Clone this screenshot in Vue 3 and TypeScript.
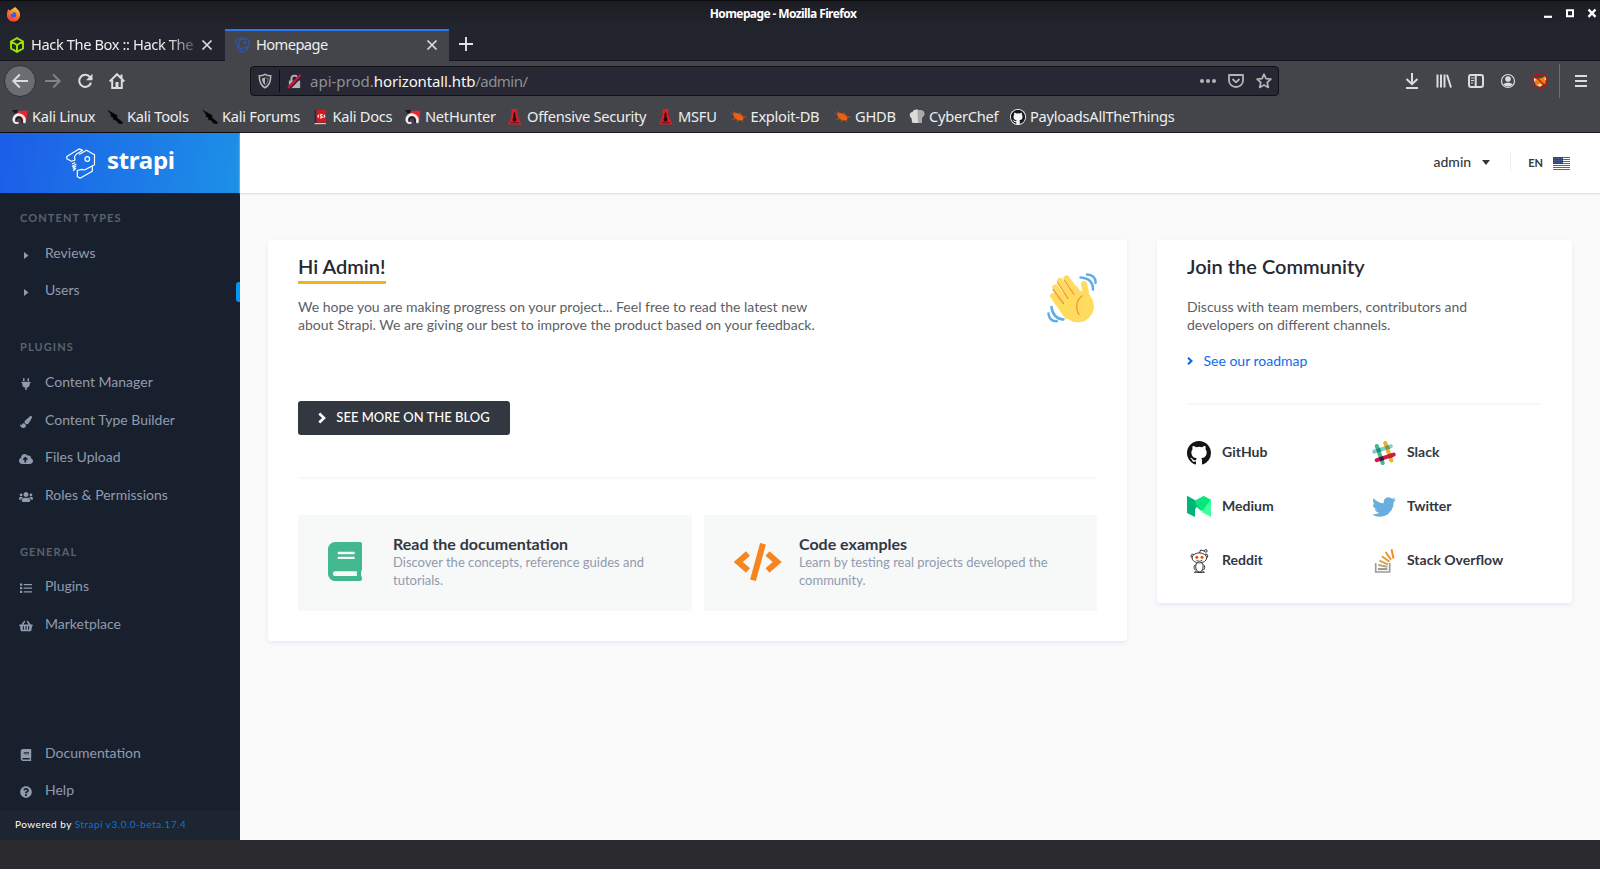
<script setup lang="ts">
interface Bookmark {
  label: string
  icon: string
  width: number
}
interface NavItem {
  label: string
  icon: string
  marked?: boolean
}
interface NavGroup {
  title: string
  items: NavItem[]
}

const bookmarks: Bookmark[] = [
  { label: 'Kali Linux', icon: 'dragon', width: 95 },
  { label: 'Kali Tools', icon: 'knife', width: 95 },
  { label: 'Kali Forums', icon: 'knife', width: 110.5 },
  { label: 'Kali Docs', icon: 'docs', width: 92.5 },
  { label: 'NetHunter', icon: 'dragon', width: 102 },
  { label: 'Offensive Security', icon: 'tower', width: 151 },
  { label: 'MSFU', icon: 'tower', width: 72.5 },
  { label: 'Exploit-DB', icon: 'bug', width: 104.5 },
  { label: 'GHDB', icon: 'bug', width: 74 },
  { label: 'CyberChef', icon: 'chef', width: 101 },
  { label: 'PayloadsAllTheThings', icon: 'octo', width: 170 },
]

const groups: NavGroup[] = [
  {
    title: 'Content types',
    items: [
      { label: 'Reviews', icon: 'caret' },
      { label: 'Users', icon: 'caret', marked: true },
    ],
  },
  {
    title: 'Plugins',
    items: [
      { label: 'Content Manager', icon: 'plug' },
      { label: 'Content Type Builder', icon: 'brush' },
      { label: 'Files Upload', icon: 'cloud' },
      { label: 'Roles & Permissions', icon: 'users' },
    ],
  },
  {
    title: 'General',
    items: [
      { label: 'Plugins', icon: 'list' },
      { label: 'Marketplace', icon: 'basket' },
    ],
  },
]

const footerItems: NavItem[] = [
  { label: 'Documentation', icon: 'book' },
  { label: 'Help', icon: 'help' },
]

const socials = [
  { label: 'GitHub', icon: 'github' },
  { label: 'Slack', icon: 'slack' },
  { label: 'Medium', icon: 'medium' },
  { label: 'Twitter', icon: 'twitter' },
  { label: 'Reddit', icon: 'reddit' },
  { label: 'Stack Overflow', icon: 'stack' },
]
</script>

<template>
  <div class="window">
    <svg class="defs" width="0" height="0">
      <linearGradient id="ff-body" x1="0.8" y1="0" x2="0.3" y2="1">
        <stop offset="0" stop-color="#ffd83a" />
        <stop offset="0.5" stop-color="#ff7a2b" />
        <stop offset="1" stop-color="#f0334e" />
      </linearGradient>
      <symbol id="dragon" viewBox="0 0 16 16">
        <path d="M4 2 15.500 1.500 14.500 11 11.500 14 9 8 4 6Z" fill="#e5262c" />
        <path d="M0 1h6L5 4.500 1.500 3.500Z" fill="#16171a" />
        <path d="M2 12c-1-4 2-7 6-6.300 3.500.8 5.500 4 4 8.300" fill="none" stroke="#f2f2f2" stroke-width="2.600" />
        <path d="M1.500 12c1.500 2.500 3.500 2.500 5 1.500" fill="none" stroke="#f2f2f2" stroke-width="1.800" />
        <path d="M4 11.500c0-2.500 3-4 5-2.300 1.200 1.200 1.500 2.800 1 4.800" fill="none" stroke="#17181c" stroke-width="1.200" />
      </symbol>
      <symbol id="knife" viewBox="0 0 16 16">
        <path d="M0 .5 8 5l2.500 1.500-.5 2 3 2.500 3 2.500-1 1.500-3.500-.5L9 11.500 6.500 11 6 8.500 3.500 7.500 4 5.500Z" fill="#050506" />
      </symbol>
      <symbol id="docs" viewBox="0 0 16 16">
        <path d="M1.500 1h2v14h-2z" fill="#1c2d5c" />
        <path d="M3.500 1h9.500v12.500H3.500z" fill="#dc1616" />
        <path d="M1.500 14H13v1.200H1.500z" fill="#f3bcbc" />
        <path d="m5.800 5.700-1 1.500 1 1.500m5-3 1 1.500-1 1.500M9.600 5.500c-2.600-.4-3 1.300-1.300 1.700s1.300 2-1.300 1.700" fill="none" stroke="#fff" stroke-width="1.100" />
      </symbol>
      <symbol id="tower" viewBox="0 0 16 16">
        <path d="M4.500 0h6v6.500l2 4.500 2 4.500H1L3 11l1.500-4.500Z" fill="#d81f26" />
        <path d="M7.500 2.500 8.500 5v3l1.200 3-1.400 1.500H6.700L5.300 11l1.200-3V5Z" fill="#2c0508" />
        <path d="M3.500 13.300h8.500v.9H3.500z" fill="#5f0d11" />
      </symbol>
      <symbol id="bug" viewBox="0 0 16 16">
        <path d="M2.500 4 6 4l4 1.500L12.500 8l-.5 3-3.500.5L4.500 10 2.500 7Z" fill="#ef5f11" />
        <path d="M.5 4 3 6M2 2.500 5 4.500M9 3.500 9.500 6M1.500 10.500l3-1M6 13l1.500-2M12 13l-1-2M12 8h3.500" stroke="#c4521a" stroke-width="1" fill="none" />
      </symbol>
      <symbol id="chef" viewBox="0 0 16 16">
        <path d="M3 13.500 2.500 9C-.3 7.500.5 3 3.500 3 4.500.2 9 0 10 1.500c4-1 7 2.500 4.500 5.500L13 8.500l-.5 5.500H5Z" fill="#dcdcdc" />
        <path d="M8.500 1 12 1.500C15 1 16.500 5 14 7.500L12.800 9l-.4 5H9Z" fill="#a9a9a9" />
      </symbol>
      <symbol id="mark" viewBox="0 0 16 16">
        <path d="M8 0C3.580 0 0 3.580 0 8c0 3.540 2.290 6.530 5.470 7.590.4.070.55-.17.55-.38 0-.19-.01-.82-.01-1.490-2.010.370-2.530-.49-2.690-.94-.09-.23-.48-.94-.82-1.130-.28-.15-.68-.52-.01-.53.630-.01 1.080.580 1.230.820.720 1.210 1.870.870 2.330.660.070-.52.280-.87.510-1.070-1.780-.2-3.640-.89-3.640-3.950 0-.87.310-1.590.820-2.150-.08-.2-.36-1.020.080-2.120 0 0 .670-.21 2.200.820a7.420 7.420 0 0 1 4 0c1.530-1.040 2.200-.82 2.200-.82.440 1.100.160 1.920.080 2.120.510.560.820 1.270.820 2.150 0 3.070-1.870 3.750-3.650 3.950.290.250.540.730.540 1.480 0 1.070-.01 1.930-.01 2.200 0 .210.150.460.550.380A8.010 8.010 0 0 0 16 8c0-4.420-3.580-8-8-8Z" />
      </symbol>
      <symbol id="octo" viewBox="0 0 16 16">
        <circle cx="8" cy="8" r="8" fill="#f4f4f4" />
        <g fill="#15181c" transform="translate(.9 .9) scale(.89)"><use href="#mark" width="16" height="16" /></g>
      </symbol>
      <symbol id="github" viewBox="0 0 16 16"><g fill="#161514"><use href="#mark" width="16" height="16" /></g></symbol>
      <symbol id="caret" viewBox="0 0 12 12"><path d="M4 3v7l4.500-3.500Z" fill="currentColor" /></symbol>
      <symbol id="plug" viewBox="0 0 384 512">
        <path fill="currentColor" d="M320 32a32 32 0 0 0-64 0v96h64Zm48 128H16a16 16 0 0 0-16 16v32a16 16 0 0 0 16 16h16v32a160.070 160.070 0 0 0 128 156.800V512h64v-99.200A160.070 160.070 0 0 0 352 256v-32h16a16 16 0 0 0 16-16v-32a16 16 0 0 0-16-16ZM128 32a32 32 0 0 0-64 0v96h64Z" />
      </symbol>
      <symbol id="brush" viewBox="0 0 512 512">
        <path fill="currentColor" d="M167 309.300c-40.100 2.600-76.500 17.900-97.200 72.300-2.300 6.200-8 10-14.600 10-11.100 0-45.400-27.700-55.200-34.300C0 439.600 38 512 128 512c75.900 0 128-43.800 128-120.200 0-3.100-.6-6.100-1-9.100zM457.900 0c-15.200 0-29.400 6.700-40.200 16.500C213.300 199 192 203.300 192 257.100c0 13.700 3.300 26.800 8.700 38.700l63.900 53.200c7.200 1.800 14.600 3 22.300 3 62.200 0 98.200-45.500 211.200-256.500C505.500 81.200 512 65.700 512 49.600 512 20.600 486 0 457.900 0z" />
      </symbol>
      <symbol id="cloud" viewBox="0 0 640 512">
        <path fill="currentColor" d="M537.600 226.600c4.100-10.700 6.400-22.400 6.400-34.600 0-53-43-96-96-96-19.700 0-38.100 6-53.300 16.200C367 64.200 315.300 32 256 32c-88.400 0-160 71.600-160 160 0 2.700.1 5.400.2 8.100C40.200 219.800 0 273.200 0 336c0 79.500 64.500 144 144 144h368c70.700 0 128-57.300 128-128 0-61.900-44-113.600-102.400-125.400zM393.400 288H328v112c0 8.800-7.200 16-16 16h-48c-8.800 0-16-7.200-16-16V288h-65.400c-14.300 0-21.400-17.200-11.300-27.300l105.400-105.400c6.200-6.200 16.400-6.200 22.600 0l105.400 105.400c10.100 10.100 2.900 27.300-11.300 27.300z" />
      </symbol>
      <symbol id="users" viewBox="0 0 640 512">
        <path fill="currentColor" d="M96 224c35.300 0 64-28.700 64-64s-28.700-64-64-64-64 28.700-64 64 28.700 64 64 64zm448 0c35.300 0 64-28.700 64-64s-28.700-64-64-64-64 28.700-64 64 28.700 64 64 64zm32 32h-64c-17.600 0-33.500 7.100-45.100 18.600 40.300 22.100 68.900 62 75.100 109.400h66c17.700 0 32-14.300 32-32v-32c0-35.300-28.700-64-64-64zm-256 0c61.900 0 112-50.100 112-112S381.900 32 320 32 208 82.100 208 144s50.100 112 112 112zm76.800 32h-8.300c-20.800 10-43.900 16-68.500 16s-47.600-6-68.500-16h-8.300C179.600 288 128 339.600 128 403.200V432c0 26.500 21.500 48 48 48h288c26.500 0 48-21.500 48-48v-28.800c0-63.600-51.600-115.200-115.200-115.200zm-223.700-13.400C161.500 263.100 145.600 256 128 256H64c-35.300 0-64 28.700-64 64v32c0 17.700 14.300 32 32 32h65.900c6.300-47.400 34.900-87.300 75.200-109.400z" />
      </symbol>
      <symbol id="list" viewBox="0 0 12 12">
        <path fill="currentColor" d="M0 1.500h2.200v2.200H0zM0 5.100h2.200v2.200H0zM0 8.700h2.200v2.200H0zM3.700 2H12v1.200H3.700zM3.700 5.600H12v1.200H3.700zM3.700 9.200H12v1.200H3.700z" />
      </symbol>
      <symbol id="basket" viewBox="0 0 576 512">
        <path fill="currentColor" d="M576 216v16c0 13.300-10.700 24-24 24h-8l-26.100 182.800c-3.400 23.600-23.600 41.200-47.500 41.200H105.600c-23.900 0-44.100-17.600-47.500-41.200L32 256h-8c-13.300 0-24-10.700-24-24v-16c0-13.300 10.700-24 24-24h67.300L198.100 45.200c10.400-14.300 30.400-17.500 44.700-7.100s17.500 30.400 7.100 44.700L170.500 192h235L326.100 82.800c-10.400-14.300-7.200-34.300 7.100-44.700s34.300-7.200 44.700 7.100L484.700 192H552c13.300 0 24 10.700 24 24zM312 392V280c0-13.300-10.700-24-24-24s-24 10.700-24 24v112c0 13.300 10.700 24 24 24s24-10.700 24-24zm112 0V280c0-13.300-10.700-24-24-24s-24 10.700-24 24v112c0 13.300 10.700 24 24 24s24-10.700 24-24zm-224 0V280c0-13.300-10.700-24-24-24s-24 10.700-24 24v112c0 13.300 10.700 24 24 24s24-10.700 24-24z" />
      </symbol>
      <symbol id="book" viewBox="0 0 448 512">
        <path fill="currentColor" d="M448 360V24c0-13.300-10.700-24-24-24H96C43 0 0 43 0 96v320c0 53 43 96 96 96h328c13.300 0 24-10.700 24-24v-16c0-7.500-3.500-14.300-8.900-18.700-4.200-15.400-4.200-59.300 0-74.700 5.400-4.300 8.900-11.100 8.900-18.600zM128 134c0-3.300 2.700-6 6-6h212c3.300 0 6 2.700 6 6v20c0 3.300-2.700 6-6 6H134c-3.300 0-6-2.700-6-6v-20zm0 64c0-3.300 2.700-6 6-6h212c3.300 0 6 2.700 6 6v20c0 3.300-2.700 6-6 6H134c-3.300 0-6-2.700-6-6v-20zm253.400 250H96c-17.700 0-32-14.300-32-32 0-17.600 14.400-32 32-32h285.400c-1.900 17.100-1.900 46.900 0 64z" />
      </symbol>
      <symbol id="help" viewBox="0 0 512 512">
        <path fill="currentColor" d="M504 256c0 137-111 248-248 248S8 393 8 256C8 119.100 119 8 256 8s248 111.100 248 248zM262.700 90c-54.500 0-89.300 23-116.600 63.800-3.500 5.200-2.400 12.400 2.700 16.200l34.700 26.300c5.200 4 12.600 3 16.700-2.100 17.800-22.700 30.100-35.800 57.300-35.800 20.400 0 45.700 13.100 45.700 33 0 14.900-12.400 22.600-32.500 33.900C247.100 238.500 216 254.900 216 296v4c0 6.600 5.400 12 12 12h56c6.600 0 12-5.400 12-12v-1.300c0-28.500 83.200-29.700 83.200-106.700 0-58-60.200-102-116.500-102zM256 338c-25.400 0-46 20.600-46 46s20.600 46 46 46 46-20.600 46-46-20.600-46-46-46z" />
      </symbol>
      <symbol id="slack" viewBox="0 0 24 24">
        <g fill="none" stroke-width="4" stroke-linecap="round">
          <path d="m2.200 10.700 16.600-5.400" stroke="#7fcbd8" />
          <path d="m13.300 2 6 17.500" stroke="#ecb22e" />
          <path d="m4.800 5 5.900 17" stroke="#43b98c" />
          <path d="m4.700 19.200 17-5.600" stroke="#d5135a" />
        </g>
        <path d="m4.200 8 3.800-1.300 1.300 3.900-3.800 1.200Z" fill="#1e8c78" />
        <path d="m12.800 5.200 3.800-1.200 1.300 3.800-3.800 1.300Z" fill="#789a3d" />
        <path d="m7 16.400 3.800-1.200 1.300 3.800-3.800 1.200Z" fill="#311c32" />
        <path d="m15.700 13.500 3.800-1.200 1.300 3.900-3.800 1.200Z" fill="#c82026" />
      </symbol>
      <symbol id="medium" viewBox="0 0 24 24">
        <path d="M8 5.500 16.500 1 24 5 15.500 16.500Z" fill="#12e27f" />
        <path d="M16.500 1 24 5 14 15.500 10.500 10.500Z" fill="#00e97a" />
        <path d="M8 5 14.500 16 8 17Z" fill="#00cc77" />
        <path d="M24 5v17l-9.500-5Z" fill="#3fffa0" />
        <path d="M8 14.500 10 12l4.500 4.500-3 .5L8 20Z" fill="#fff" />
        <path d="M0 .8 8 5v17l-8-4Z" fill="#00b676" />
      </symbol>
      <symbol id="twitter" viewBox="0 0 24 24">
        <path fill="#68afe0" d="M23.953 4.570a10 10 0 0 1-2.825.775 4.958 4.958 0 0 0 2.163-2.723c-.951.555-2.005.959-3.127 1.184a4.920 4.920 0 0 0-8.384 4.482C7.690 8.095 4.067 6.130 1.640 3.162a4.822 4.822 0 0 0-.666 2.475c0 1.710.870 3.213 2.188 4.096a4.904 4.904 0 0 1-2.228-.616v.060a4.923 4.923 0 0 0 3.946 4.827 4.996 4.996 0 0 1-2.212.085 4.936 4.936 0 0 0 4.604 3.417 9.867 9.867 0 0 1-6.102 2.105c-.390 0-.779-.023-1.170-.067a13.995 13.995 0 0 0 7.557 2.209c9.053 0 13.998-7.496 13.998-13.985 0-.210 0-.420-.015-.630A9.935 9.935 0 0 0 24 4.590z" />
      </symbol>
      <symbol id="reddit" viewBox="0 0 24 24">
        <g fill="#fff" stroke="#222" stroke-width="0.900">
          <path d="M12.500 4 13.500 1l4 1" fill="none" />
          <circle cx="18.800" cy="1.900" r="1.300" />
          <ellipse cx="12.400" cy="17.700" rx="3.700" ry="5.200" />
          <path d="M8.600 15.500c-2 1-2 4.500-.2 5.500M16.200 15.500c2 1 2 4.500.2 5.500M7.300 23.500h10.200" fill="none" />
          <path d="M8 23.300c-.5-1.500 2-1.800 2.500 0M14.300 23.300c.5-1.800 3-1.500 2.500 0" />
          <circle cx="5.800" cy="7" r="1.800" />
          <circle cx="19" cy="7" r="1.800" />
          <ellipse cx="12.400" cy="8.900" rx="7.300" ry="5" />
          <path d="M9.500 11.300c1.800 1.300 4 1.300 5.800 0" fill="none" />
        </g>
        <circle cx="9.800" cy="8.300" r="1.500" fill="#ff4500" />
        <circle cx="15" cy="8.300" r="1.500" fill="#ff4500" />
      </symbol>
      <symbol id="stack" viewBox="0 0 24 24">
        <path d="M3.700 14v9h14v-9" fill="none" stroke="#9c9c9c" stroke-width="1.700" />
        <g fill="none" stroke-width="2">
          <path d="M6 20.100h9.400" stroke="#9a9590" />
          <path d="m6.200 16.100 9.200 1.700" stroke="#bfa67a" />
          <path d="m7.300 11.700 8.700 3.700" stroke="#d2a252" />
          <path d="m9.800 7.200 7.700 5.600" stroke="#e39a32" />
          <path d="m13.700 3 5.300 7.800" stroke="#f29323" />
          <path d="m19.500.3 2 9.300" stroke="#f48c1c" />
        </g>
      </symbol>
      <symbol id="bird" viewBox="0 0 30 31">
        <g fill="none" stroke="currentColor" stroke-linejoin="round">
          <path d="M.8 8.500 13 .9l3.500 1.500L10.500 6 8.500 8.500 9 12l-3.500 1.200-4.700-2.400Z" />
          <path d="M13 6.500 20.500 2.200l8 4.600v10L18.500 22l-2.700-.7-4.500 1.200v6L14 30.200l12.300-7v-4.700" />
          <path d="m9 14.500-3 1.500m4.300 0-3.800 2.200 1.700.2M10.300 18l-3.300 2 2 .3M10 20.300l-3 2.500" />
        </g>
        <circle cx="21.300" cy="11" r="2.300" fill="none" stroke="currentColor" />
      </symbol>
      <symbol id="close" viewBox="0 0 12 12"><path d="m1.500 1.500 9 9m0-9-9 9" stroke="currentColor" stroke-width="1.700" fill="none" /></symbol>
    </svg>

    <header class="chrome">
      <div class="titlebar">
        <svg class="firefox" viewBox="0 0 16 16">
          <path d="M2.500 2.500 4 4c2-1.500 3-2 5.500-4C12 2 15.500 5 15 9c-.5 4-3.500 6.500-7 6.500S1 13 1 9c0-3 .5-4.500 1.500-6.500Z" fill="url(#ff-body)" />
          <circle cx="8" cy="8.300" r="3" fill="#3a62d8" />
          <path d="M3 6.500c2 0 3-1 5-.8L6.800 7.500Z" fill="#ff9a35" />
        </svg>
        <span class="window-title">Homepage - Mozilla Firefox</span>
        <svg class="window-buttons" viewBox="0 0 54 14">
          <path d="M1 9.800h8" stroke="#fff" stroke-width="2.200" />
          <path d="M24 3.200h6v6h-6z" fill="none" stroke="#fff" stroke-width="2" />
          <path d="m45.500 2.500 7 7.400m0-7.400-7 7.400" stroke="#fff" stroke-width="2.400" />
        </svg>
      </div>

      <div class="tabs">
        <div class="tab">
          <svg class="tab-icon" viewBox="0 0 16 16"><path d="M8 1.200 14 4.500v7L8 14.800 2 11.500v-7ZM2 4.500 8 8l6-3.500M8 8v6.500" fill="none" stroke="#9be800" stroke-width="1.900" /></svg>
          <span class="tab-label faded">Hack The Box :: Hack The</span>
          <svg class="tab-close"><use href="#close" /></svg>
        </div>
        <div class="tab active">
          <svg class="tab-icon blue"><use href="#bird" /></svg>
          <span class="tab-label">Homepage</span>
          <svg class="tab-close"><use href="#close" /></svg>
        </div>
        <svg class="plus" viewBox="0 0 14 14"><path d="M7 0v14M0 7h14" stroke="#e4e4e4" stroke-width="1.900" /></svg>
      </div>

      <div class="toolbar">
        <div class="nav-buttons">
          <span class="back"><svg viewBox="0 0 16 16"><path d="M16 8H1.500m6.300-6.500L1.300 8l6.500 6.500" /></svg></span>
          <svg class="dim" viewBox="0 0 16 16"><path d="M0 8h14.500M8.200 1.500 14.700 8l-6.500 6.500" /></svg>
          <svg viewBox="0 0 16 16"><path d="M13 4.200A6 6 0 1 0 14 9.600" /><path d="M15.500.8v6.500H9Z" class="solid" /></svg>
          <svg viewBox="0 0 16 16"><path d="M.7 8.500 8 1.200l7.300 7.300M3.200 7v8h9.600V7M12.500 1.500V5" /><path d="M6.500 9h3v6h-3z" class="solid" /></svg>
        </div>
        <div class="urlbar">
          <svg class="shield" viewBox="0 0 16 16"><path d="M8 1.300c2 1.300 4 1.400 5.700 1.400 0 5-.5 9.500-5.700 12-5.200-2.500-5.700-7-5.700-12C4 2.700 6 2.600 8 1.300Z" fill="none" stroke="#b4b4b8" stroke-width="1.600" /><path d="M8 4.500c-1 .6-2 .8-3 .8 0 3 .5 5 3 6.700Z" fill="#b4b4b8" /><path d="M8 4.500c1 .6 2 .8 3 .8 0 3-.5 5-3 6.700" fill="none" stroke="#b4b4b8" stroke-width=".6" /></svg>
          <i class="url-divider"></i>
          <svg class="lock" viewBox="0 0 16 16"><path d="M2 7h12v8H2z" fill="#b4b4b8" /><path d="M4.700 8V5a3.300 3.300 0 0 1 6.600 0v3" fill="none" stroke="#b4b4b8" stroke-width="2" /><path d="M1.500 15.500 15 1.500" stroke="#272833" stroke-width="4" /><path d="M1 15 14.500 1" stroke="#e8123f" stroke-width="2" /></svg>
          <span class="url">api-prod.<b>horizontall.htb</b><span class="path">/admin/</span></span>
          <div class="url-actions">
            <svg viewBox="0 0 16 16"><g fill="#b4b4b8"><circle cx="2" cy="8" r="2" /><circle cx="8" cy="8" r="2" /><circle cx="14" cy="8" r="2" /></g></svg>
            <svg viewBox="0 0 16 16"><path d="M1 2h14v5.500a7 6.500 0 0 1-14 0Zm3.500 4L8 9.300 11.500 6" fill="none" stroke="#b4b4b8" stroke-width="1.800" stroke-linejoin="round" /></svg>
            <svg viewBox="0 0 16 16"><path d="m8 1.200 2 4.500 4.900.5-3.700 3.300 1.100 4.900L8 12l-4.300 2.400 1.100-4.900-3.700-3.300 4.900-.5Z" fill="none" stroke="#b4b4b8" stroke-width="1.700" stroke-linejoin="round" /></svg>
          </div>
        </div>
        <div class="tools">
          <svg viewBox="0 0 16 16"><path d="M8 0v11M2.500 6 8 11.200 13.500 6M2 15h12" /></svg>
          <svg viewBox="0 0 16 16"><path d="M1.500 1.500v13M5 1.500v13M8.500 1.500v13M11 1.800l4 12.700" /></svg>
          <svg viewBox="0 0 16 16"><rect x="1" y="2" width="14" height="12" rx="2" /><path d="M7.700 2v12" /><path d="M3 5h3M3 7.500h3M3 10h2" class="thin" /></svg>
          <svg viewBox="0 0 16 16"><circle cx="8" cy="8" r="6.500" class="thin" /><circle cx="8" cy="6" r="2.800" class="solid" /><path d="M3.500 11.500c1-2.500 8-2.500 9 0-2 2.500-7 2.500-9 0Z" class="solid" /></svg>
          <svg viewBox="0 0 16 16">
            <path d="M2 5.500 6 5.500 10 5l3-2 1 4-1 4L8 14l-4-1.500-1.500-4Z" fill="#e8820e" stroke="none" />
            <path d="M1 4 4 6.500 2.500 9ZM13 2.500 15 6l-2.500 1.500ZM5.500 11.500l4.500-1-1.500 3-2-.5Z" fill="#f0ddd0" stroke="none" />
            <circle cx="8" cy="8" r="7.200" stroke="#c80d12" stroke-width="1.200" /><path d="m3 3 10 10" stroke="#c80d12" stroke-width="1.200" />
          </svg>
          <i class="tool-divider"></i>
          <svg class="menu" viewBox="0 0 12 12"><path d="M0 1h12M0 6h12M0 11h12" stroke-width="1.800" /></svg>
        </div>
      </div>

      <nav class="bookmarks">
        <span v-for="mark in bookmarks" :key="mark.label" class="bookmark" :style="{ width: mark.width + 'px' }">
          <svg><use :href="'#' + mark.icon" /></svg>{{ mark.label }}
        </span>
      </nav>
    </header>

    <div class="page">
      <aside class="sidebar">
        <div class="brand">
          <svg class="brand-bird"><use href="#bird" /></svg>
          <span class="brand-name">strapi</span>
        </div>
        <section v-for="group in groups" :key="group.title" class="group">
          <h3>{{ group.title }}</h3>
          <a v-for="item in group.items" :key="item.label" class="link">
            <svg :class="'i-' + item.icon"><use :href="'#' + item.icon" /></svg>
            <span>{{ item.label }}</span>
            <i v-if="item.marked" class="marker"></i>
          </a>
        </section>
        <section class="bottom-links">
          <a v-for="item in footerItems" :key="item.label" class="link">
            <svg :class="'i-' + item.icon"><use :href="'#' + item.icon" /></svg>
            <span>{{ item.label }}</span>
          </a>
        </section>
        <footer class="powered">Powered by <a>Strapi v3.0.0-beta.17.4</a></footer>
      </aside>

      <main class="main">
        <div class="topbar">
          <span class="user">admin</span>
          <svg class="down" viewBox="0 0 8 5"><path d="M0 0h8L4 5Z" fill="#333740" /></svg>
          <i class="top-divider"></i>
          <span class="lang">EN</span>
          <svg class="flag" viewBox="0 0 17 13">
            <path d="M0 0h17v13H0z" fill="#fff" />
            <path d="M0 .5h17M0 2.500h17M0 4.500h17M0 6.500h17M0 8.500h17M0 10.500h17M0 12.500h17" stroke="#bd3d44" />
            <path d="M0 0h10v7H0z" fill="#2c4375" />
            <path d="M1 1.500h8M1 3.500h8M1 5.500h8" stroke="#8b99b8" stroke-width=".6" stroke-dasharray=".8 1" />
          </svg>
        </div>

        <div class="content">
          <section class="card welcome">
            <div class="intro">
              <div>
                <h2 class="underlined">Hi Admin!</h2>
                <p>We hope you are making progress on your project... Feel free to read the latest new<br />about Strapi. We are giving our best to improve the product based on your feedback.</p>
              </div>
              <svg class="wave" viewBox="0 0 50 50">
                <g fill="none" stroke="#5dadec" stroke-width="2.500" stroke-linecap="round">
                  <path d="M33.500 4.500c8.500.5 12.500 5 12.500 12M40 1.500c5.500 0 9 3.500 8.500 8.500M4.500 34c1 8 5.500 12 12 12.500M1.500 40.500c.3 5 3.500 7.800 8.300 7.800" />
                </g>
                <g stroke="#ffdc5d" stroke-linecap="round" fill="#ffdc5d">
                  <path d="m19.500 5.500 14 19M13 8l15 21M8.500 14.500l15 21M6.200 23l14 20" stroke-width="6.200" />
                  <path d="m37 11 4 18" stroke-width="6" />
                  <path d="m11 24 18-11 6.500 9c4-4 9 .5 10 9 1 12-12 22-24 14Z" stroke-width="1" />
                  <circle cx="31" cy="33.500" r="15.500" stroke-width="1" />
                </g>
                <path d="m17.500 7.500 9.500 14M10.500 9.500 21 25.500M6 16.500l10.500 14M35 23c-6.500 5-6.500 13-3 18.500" fill="none" stroke="#ef9645" stroke-width="1.300" stroke-linecap="round" />
              </svg>
            </div>
            <button class="blog"><svg viewBox="0 0 8 12"><path d="m1.300 1.500 4.700 4.500-4.700 4.500" fill="none" stroke="#fff" stroke-width="2.600" /></svg>SEE MORE ON THE BLOG</button>
            <hr />
            <div class="tiles">
              <article class="tile">
                <svg class="tile-book"><use href="#book" /></svg>
                <div><h4>Read the documentation</h4><p>Discover the concepts, reference guides and<br />tutorials.</p></div>
              </article>
              <article class="tile">
                <svg class="tile-code" viewBox="0 0 48 38"><path d="M14 10.500 4.300 19l9.700 8.500M33.500 10.500 43.200 19l-9.700 8.500" fill="none" stroke="#f5851f" stroke-width="6" /><path d="M29 .8 19 37.200" stroke="#f5851f" stroke-width="6" /></svg>
                <div><h4>Code examples</h4><p>Learn by testing real projects developed the<br />community.</p></div>
              </article>
            </div>
          </section>

          <section class="card community">
            <h2>Join the Community</h2>
            <p>Discuss with team members, contributors and<br />developers on different channels.</p>
            <a class="roadmap"><svg viewBox="0 0 6 8"><path d="m1 .8 3.500 3.200L1 7.200" fill="none" stroke="#0164e8" stroke-width="2" /></svg>See our roadmap</a>
            <hr />
            <div class="socials">
              <a v-for="social in socials" :key="social.label" class="social">
                <svg><use :href="'#' + social.icon" /></svg><span>{{ social.label }}</span>
              </a>
            </div>
          </section>
        </div>
      </main>
    </div>
    <div class="screen-edge"></div>
  </div>
</template>

<style>
body { margin: 0; background: #2a2a2e; }
</style>

<style scoped>
* { box-sizing: border-box; }
h2, h3, h4, p { margin: 0; }
.defs { position: absolute; }
.window { width: 1600px; height: 869px; display: flex; flex-direction: column; overflow: hidden; font-family: Lato, sans-serif; }

.chrome { height: 133px; flex: none; display: flex; flex-direction: column; background: #43454b; border-bottom: 1px solid #0c0c0d; font-family: "Noto Sans", sans-serif; color: #eeeeee; }
.titlebar { height: 29px; flex: none; display: flex; align-items: center; justify-content: space-between; padding: 0 3px 3px 6px; background: linear-gradient(#1c1d24, #23252e); border-top: 1px solid #0b0b0e; }
.firefox { width: 15px; height: 15px; margin-top: 2px; }
.window-title { font-size: 12px; font-weight: 700; letter-spacing: -0.6px; color: #fff; padding-left: 2px; }
.window-buttons { width: 54px; height: 14px; margin-top: 1px; }
.tabs { height: 32px; flex: none; display: flex; background: #23252e; box-shadow: inset 0 -1px #16171d; }
.tab { width: 225px; display: flex; align-items: center; padding: 0 12px 0 9px; font-size: 14.67px; letter-spacing: -0.4px; }
.tab.active { width: 224px; padding-right: 11px; background: #43454b; border-top: 2px solid #2d76f0; letter-spacing: -0.57px; }
.tab-label { flex: 1; white-space: nowrap; margin: -2px 7px 0 0; }
.tab.active .tab-label { margin-top: -4px; }
.tab.active .tab-close { margin-top: -2px; }
.tab-icon { width: 16px; height: 16px; margin-right: 6px; flex: none; }
.tab-icon.blue { color: #285bd4; stroke-width: 1.8; margin-top: -2px; }
.faded { mask-image: linear-gradient(90deg, #000 84%, rgba(0, 0, 0, 0.25)); }
.tab-close { width: 12px; height: 12px; flex: none; color: #dcdcdc; }
.plus { width: 14px; height: 14px; margin: 8px 0 0 10px; }

.toolbar { height: 40px; flex: none; display: flex; align-items: center; padding: 0 11px 0 4px; }
.nav-buttons { width: 246px; display: flex; align-items: center; gap: 16px; }
.nav-buttons svg { width: 16px; height: 16px; fill: none; stroke: #dcdcdc; stroke-width: 2; }
.nav-buttons svg.dim { stroke: #828388; margin-left: -7px; }
.nav-buttons .solid, .tools .solid { fill: #dcdcdc; stroke: none; }
.back { width: 32px; height: 32px; border-radius: 50%; background: #6c6d72; border: 1px solid #303136; display: grid; place-items: center; }
.urlbar { width: 1029px; height: 30px; display: flex; align-items: center; background: #272833; border: 1px solid #101116; border-radius: 4px; padding: 0 6px 0 6px; }
.shield { width: 16px; height: 16px; }
.url-divider { width: 1px; height: 22px; background: #0c0d12; margin: 0 7px 0 6px; }
.lock { width: 15px; height: 15px; }
.url { font-size: 15px; color: #8e8f96; margin-left: 8px; }
.url b { font-weight: 400; letter-spacing: -0.12px; color: #f7f7f7; }
.url .path { letter-spacing: -0.55px; }
.url-actions { margin-left: auto; display: flex; gap: 12px; }
.url-actions svg { width: 16px; height: 16px; }
.tools { margin-left: auto; display: flex; align-items: center; gap: 16px; }
.tools svg { width: 16px; height: 16px; fill: none; stroke: #dcdcdc; stroke-width: 2; }
.tools .thin { stroke-width: 1.2; }
.tool-divider { width: 1px; height: 34px; background: #6d6e73; margin: 0 -1px 0 -5px; }
.tools svg.menu { width: 12px; height: 12px; margin-right: 2px; }
.bookmarks { flex: 1; display: flex; align-items: center; padding: 0 0 2px 12px; }
.bookmark { flex: none; display: flex; align-items: center; font-size: 14.67px; letter-spacing: -0.27px; white-space: nowrap; }
.bookmark svg { width: 16px; height: 16px; margin: 2px 4px 0 0; flex: none; }

.page { height: 707px; flex: none; display: flex; }
.sidebar { width: 240px; flex: none; background: #18202e; display: flex; flex-direction: column; }
.brand { height: 60px; flex: none; display: flex; align-items: center; padding-left: 65.5px; background: linear-gradient(100deg, #1c5de7, #1c91e7); color: #fff; }
.brand-bird { width: 30px; height: 31px; stroke-width: 1.2; }
.brand-name { font: 700 24px/30px "Noto Sans", sans-serif; letter-spacing: -0.3px; margin: -6px 0 0 11.5px; }
.group { padding-top: 14px; margin-bottom: 14px; }
.group h3 { font-size: 11px; line-height: 22px; font-weight: 700; letter-spacing: 1.1px; text-transform: uppercase; color: #5b626f; padding-left: 20px; margin-bottom: 4.4px; }
.link { height: 37.500px; display: flex; align-items: center; padding-left: 19px; color: #919bae; font-size: 14px; }
.link svg { width: 14px; height: 12px; margin: 5px 12px 0 0; flex: none; }
.marker { width: 4px; height: 20px; margin: 5px 0 0 auto; border-radius: 3px 0 0 3px; background: #0097f7; }
.bottom-links { margin: auto 0 1.5px; }
.powered { height: 30px; flex: none; background: #1c2531; color: #fff; font-size: 10px; line-height: 29px; letter-spacing: 0.5px; padding-left: 15px; }
.powered a { color: #0b72dd; }

.main { flex: 1; background: #fafafb; }
.topbar { height: 60px; background: #fff; display: flex; align-items: center; justify-content: flex-end; padding: 0 30px 2px 0; box-shadow: 0 1px 2px #d9dbdf; color: #333740; position: relative; }
.user { font-size: 14px; font-weight: 500; margin-top: -1px; }
.down { width: 8px; height: 5px; margin-left: 11px; }
.top-divider { width: 1px; height: 20px; background: #f0f0f2; margin: 0 17px 0 20px; }
.lang { font-size: 11px; font-weight: 700; margin-top: 1px; }
.flag { width: 17px; height: 13px; margin: 2px 0 0 10px; }
.content { display: flex; align-items: flex-start; gap: 30px; padding: 47px 28px; }
.card { background: #fff; border-radius: 3px; box-shadow: 0 2px 4px #e3e9f3; padding: 0 30px; }
.welcome { width: 859px; height: 401px; }
.community { width: 415px; height: 363px; }
h2 { font-size: 20px; line-height: 24px; font-weight: 600; color: #262931; padding-top: 14px; }
.card p { font-size: 14px; line-height: 18px; color: #5c5f66; }
.intro { display: flex; justify-content: space-between; height: 161px; }
.underlined { width: fit-content; border-bottom: 3px solid #f0b41c; height: 44px; }
.intro p { margin-top: 14px; }
.wave { width: 50px; height: 50px; margin-top: 33px; flex: none; }
.blog { width: 212px; height: 34px; border: 0; border-radius: 3px; background: #333740; color: #fff; font: 500 13px Lato, sans-serif; display: flex; align-items: center; justify-content: center; padding: 0 0 2px; }
.blog svg { width: 8px; height: 12px; margin: 2px 10px 0 0; }
hr { border: 0; height: 2px; margin: 0; background: #f7f8f8; }
.welcome hr { margin-top: 42px; }
.tiles { display: grid; grid-template-columns: 394px 393px; gap: 12px; margin-top: 36px; }
.tile { height: 96px; background: #f7f8f8; display: flex; align-items: flex-start; }
.tile > div { padding-top: 19px; }
.tile-book { width: 34px; height: 39px; margin: 27px 31px 0 30px; color: #42b88e; }
.tile-code { width: 48px; height: 38px; margin: 28px 17.5px 0 29.5px; }
.tile h4 { font-size: 16px; line-height: 19px; font-weight: 700; color: #333740; }
.tile p { font-size: 13px; color: #919bae; }
.community > p { margin-top: 20px; }
.roadmap { display: flex; align-items: center; height: 18px; margin-top: 17px; color: #0b6cf0; font-size: 14px; }
.roadmap svg { width: 6px; height: 8px; margin: 1px 10.5px 0 0; }
.community hr { margin-top: 34px; }
.socials { display: grid; grid-template-columns: 185px 1fr; row-gap: 30px; margin-top: 36px; }
.social { display: flex; align-items: center; height: 24px; font-size: 14px; font-weight: 700; color: #333740; }
.social svg { width: 24px; height: 24px; margin-right: 11px; }
.social span { margin-top: -3px; }
.screen-edge { flex: 1; background: #2a2a2e; }
</style>
